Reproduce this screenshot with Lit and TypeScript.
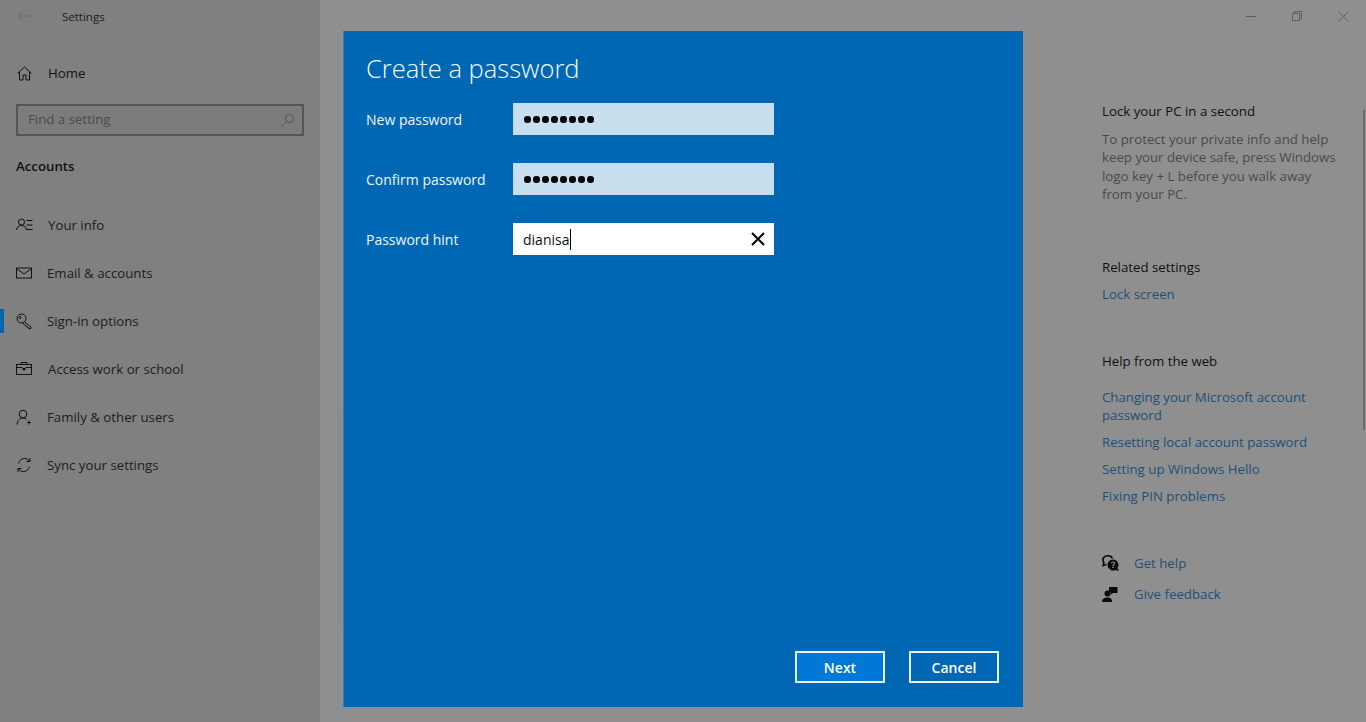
import { LitElement, html, css, svg } from "lit";
import { customElement } from "lit/decorators.js";

const navIcons: Record<string, unknown> = {
  info: svg`<circle cx="5.500" cy="5" r="3"/><path d="M.5 13c.4-3 2.300-4.500 5-4.500s4.600 1.500 5 4.500"/><path d="M10.500 3.500h6M10.500 8h6M10.500 12.500h6"/>`,
  mail: svg`<rect x="0.500" y="3" width="15" height="10"/><path d="M0.500 3.500 8 9l7.500-5.500"/>`,
  key: svg`<circle cx="5.500" cy="5.500" r="4.500"/><circle cx="4" cy="4.500" r="1"/><path d="M8.500 9l6.500 5v1.500h-2.500l-.5-1.500h-1.500l-.5-1.500-1.500-.5-2-2.500"/>`,
  work: svg`<rect x="0.500" y="3.500" width="15" height="10"/><path d="M5 3.500V1.500h6v2M0.500 6.500h5.500l2 1.800 2-1.800h5.500"/><path d="M7 7.500h2v1.500H7z"/>`,
  family: svg`<circle cx="7" cy="5" r="3.800"/><path d="M1 15.500c.3-4 2.800-6.500 6-6.500 1.500 0 2.600.4 3.500 1.200"/><path d="M13 11.500v4M11 13.500h4"/>`,
  sync: svg`<path d="M2.500 6.500C3.300 3.600 5.400 1.500 8.500 1.500c2.300 0 4 1 5.200 2.800"/><path d="M14 1v3.500h-3.500"/><path d="M13.500 9.500c-.8 2.900-2.900 5-6 5-2.300 0-4-1-5.200-2.800"/><path d="M2 15v-3.500h3.500"/>`,
};

const navItems = [
  { id: "info", label: "Your info", cls: "tx1" },
  { id: "mail", label: "Email & accounts", cls: "" },
  { id: "key", label: "Sign-in options", cls: "", active: true },
  { id: "work", label: "Access work or school", cls: "tx1" },
  { id: "family", label: "Family & other users", cls: "" },
  { id: "sync", label: "Sync your settings", cls: "" },
];

@customElement("app-root")
export class AppRoot extends LitElement {
  static styles = css`
    :host {
      display: grid;
      grid-template-columns: 320px 1fr;
      position: relative;
      width: 1366px;
      height: 722px;
      overflow: hidden;
      background: #8f8f8f;
      font-family: "Open Sans", "Noto Sans", sans-serif;
      font-size: 13.25px;
      color: #111;
    }
    svg { display: block; fill: none; stroke: currentColor; stroke-width: 1; }

    .side { background: #808080; display: flex; flex-direction: column; }
    .titlebar { height: 32px; display: flex; align-items: center; padding-left: 17px; gap: 31px; font-size: 11.5px; color: #1c1c1c; }
    .back { color: #6a6a6a; }
    .home { height: 48px; margin-top: 17px; display: flex; align-items: center; padding-left: 17px; gap: 16px; color: #111; }
    .search {
      margin: 7px 16px 0; height: 32px; box-sizing: border-box;
      border: 2px solid #565656; background: #7c7c7c;
      display: flex; align-items: center; justify-content: space-between;
      padding: 0 7px 2px 10px; color: #4a4a4a;
    }
    .search svg { color: #555; margin-top: 2px; }
    .group { margin: 19px 0 0 16px; font-weight: 600; line-height: 22px; color: #111; }
    nav { margin-top: 24px; display: flex; flex-direction: column; }
    .row { height: 48px; display: flex; align-items: center; padding-left: 16px; gap: 14px; color: #1c1c1c; position: relative; }
    .row svg { color: #111; }
    .row span { white-space: nowrap; }
    .row .tx1 { margin-left: 1px; }
    .row.active::before { content: ""; position: absolute; left: 0; top: 12px; width: 4px; height: 24px; background: #0064ae; }

    .main { position: relative; padding-left: 782px; display: flex; flex-direction: column; }
    .controls { position: absolute; top: 0; right: 0; display: flex; color: #5f5f5f; }
    .controls div { width: 46px; height: 32px; display: flex; align-items: center; justify-content: center; }
    .h { line-height: 18px; color: #111; white-space: nowrap; }
    .lock { margin-top: 102px; }
    .para { margin-top: 10px; width: 240px; line-height: 18.4px; color: #4a4a4a; }
    .rel { margin-top: 54px; }
    .a { color: #1d4f7a; line-height: 18px; display: block; width: 236px; }
    .a.first { margin-top: 9px; }
    .web { margin-top: 49px; }
    .links { margin-top: 18px; display: flex; flex-direction: column; gap: 9px; }
    .support { margin-top: 49px; display: flex; flex-direction: column; gap: 13px; }
    .support div { display: flex; align-items: center; gap: 15px; height: 18px; color: #1d4f7a; }
    .support svg { color: #0a0a0a; fill: #0a0a0a; stroke: none; }

    .thumb { position: absolute; left: 1043px; top: 110px; width: 2px; height: 320px; background: #6a6a6a; }
    .shade { position: absolute; left: 17px; top: 410px; width: 4px; height: 215px; background: #8a8a8a; }

    .dialog {
      position: absolute; left: 343px; top: 31px; width: 680px; height: 676px; box-sizing: border-box;
      background: #0067b5; color: #fff; padding: 19px 24px 24px 23px;
      display: flex; flex-direction: column;
      border-left: 1px solid #2f7db8;
    }
    h1 { margin: 0 0 0 -1px; font-weight: 300; font-size: 25.5px; line-height: 36px; color: #f4fbff; white-space: nowrap; }
    .form { margin-top: 17px; display: grid; grid-template-columns: 146px 261px; grid-auto-rows: 32px; row-gap: 28px; align-items: center; font-size: 14px; }
    label { color: #eef6fc; margin-left: -1px; white-space: nowrap; }
    .field { height: 32px; box-sizing: border-box; background: #c8dfef; color: #000; display: flex; align-items: center; padding: 0 11px; font-size: 14px; }
    .dots { display: flex; gap: 2.5px; margin-top: 1px; }
    .dots i { width: 6.500px; height: 6.500px; border-radius: 50%; background: #000; }
    .field.on { background: #fff; justify-content: space-between; padding: 0 9px 0 10px; }
    .val { display: flex; align-items: center; color: #111; }
    .caret { width: 1px; height: 21px; background: #000; margin-left: 1px; }
    .x { color: #000; stroke-width: 2; }
    .foot { margin-top: auto; display: flex; justify-content: flex-end; gap: 24px; }
    button {
      width: 90px; height: 32px; box-sizing: border-box; border: 2px solid #e8f4fb; background: #0067b5;
      color: #fff; font: 600 14px "Open Sans", "Noto Sans", sans-serif; padding: 0;
    }
    button.primary { background: #0078d7; }
  `;

  private icon(id: string) {
    return html`<svg width="17" height="16" viewBox="0 0 17 16">${navIcons[id]}</svg>`;
  }

  render() {
    return html`
      <aside class="side">
        <div class="titlebar">
          <svg class="back" width="14" height="12" viewBox="0 0 14 12"><path d="M13.500 6H1M6 1 1 6l5 5"/></svg>
          <span>Settings</span>
        </div>
        <div class="home">
          <svg width="15" height="15" viewBox="0 0 15 15"><path d="M.5 7.500 7.500 1l7 6.500M2.500 6v8h3.500V9h3v5h3.500V6"/></svg>
          <span>Home</span>
        </div>
        <div class="search">
          <span>Find a setting</span>
          <svg width="15" height="15" viewBox="0 0 15 15"><circle cx="9.500" cy="5.500" r="4"/><path d="M6.500 8.500 1 14"/></svg>
        </div>
        <div class="group">Accounts</div>
        <nav>
          ${navItems.map((n) => html`<div class="row ${n.active ? "active" : ""}">${this.icon(n.id)}<span class=${n.cls}>${n.label}</span></div>`)}
        </nav>
      </aside>
      <main class="main">
        <div class="shade"></div>
        <div class="controls">
          <div><svg width="10" height="10" viewBox="0 0 10 10"><path d="M0 5.500h10"/></svg></div>
          <div><svg width="10" height="10" viewBox="0 0 10 10"><path d="M.5 2.500h7v7h-7zM2.500 2.500v-2h7v7h-2"/></svg></div>
          <div><svg width="11" height="11" viewBox="0 0 11 11"><path d="M.5.500l10 10M10.500.500l-10 10"/></svg></div>
        </div>
        <div class="thumb"></div>
        <div class="h lock">Lock your PC in a second</div>
        <div class="para">To protect your private info and help keep your device safe, press Windows logo key + L before you walk away from your PC.</div>
        <div class="h rel">Related settings</div>
        <a class="a first">Lock screen</a>
        <div class="h web">Help from the web</div>
        <div class="links">
          <a class="a">Changing your Microsoft account password</a>
          <a class="a">Resetting local account password</a>
          <a class="a">Setting up Windows Hello</a>
          <a class="a">Fixing PIN problems</a>
        </div>
        <div class="support">
          <div>
            <svg width="17" height="16" viewBox="0 0 17 16"><path d="M6 0c3 0 5 1.700 5 3.500H9.500C8.800 2.300 7.600 1.500 6 1.500 3.500 1.500 1.700 3 1.700 5c0 1 .4 1.800 1.100 2.500L2 9.500l2.500-1V10L0 12l1-4.500C.3 6.700 0 5.900 0 5c0-2.800 2.600-5 6-5z"/><path fill-rule="evenodd" d="M11 4.500a5.500 5.500 0 0 1 4.500 8.600L17 16l-3.500-1.100A5.500 5.500 0 1 1 11 4.500zM10.300 11.500h1.400v1.400h-1.400zM9 8.300c.1-1.100 1-1.800 2.100-1.800 1.200 0 2.100.7 2.100 1.800 0 .9-.5 1.300-1.100 1.700-.4.200-.5.400-.5.900h-1.200c0-.9.300-1.300.9-1.700.4-.3.700-.5.700-.9s-.4-.7-.9-.7-.9.300-1 .7z"/></svg>
            <span>Get help</span>
          </div>
          <div>
            <svg width="17" height="16" viewBox="0 0 17 16"><circle cx="5.500" cy="7.500" r="3"/><path d="M0 16c0-3 2-4.500 5.500-4.500S10 13 10 16zM7 1h8.500v6H11l-2 1.700V6.500H7z"/></svg>
            <span>Give feedback</span>
          </div>
        </div>
      </main>
      <section class="dialog">
        <h1>Create a password</h1>
        <div class="form">
          <label>New password</label>
          <div class="field"><div class="dots">${[...Array(8)].map(() => html`<i></i>`)}</div></div>
          <label>Confirm password</label>
          <div class="field"><div class="dots">${[...Array(8)].map(() => html`<i></i>`)}</div></div>
          <label>Password hint</label>
          <div class="field on">
            <div class="val">dianisa<div class="caret"></div></div>
            <svg class="x" width="14" height="14" viewBox="0 0 14 14"><path d="M1 1l12 12M13 1 1 13"/></svg>
          </div>
        </div>
        <div class="foot">
          <button class="primary">Next</button>
          <button>Cancel</button>
        </div>
      </section>
    `;
  }
}
